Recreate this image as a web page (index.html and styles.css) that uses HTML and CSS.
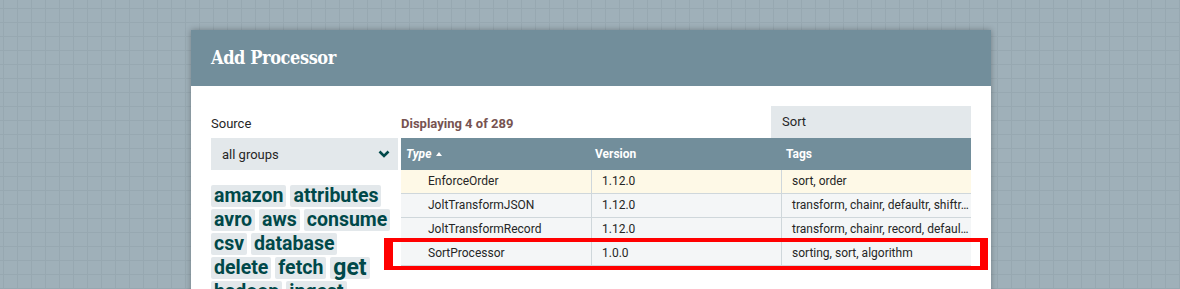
FILE: index.html
```html
<!DOCTYPE html>
<html>
<head>
<meta charset="utf-8">
<link rel="stylesheet" href="styles.css">
</head>
<body>
<div class="dialog">
  <div class="dialog-header">Add Processor</div>
  <div class="dialog-body">
    <div class="side">
      <div class="label">Source</div>
      <div class="select">
        <span>all groups</span>
        <svg class="chev" width="12" height="8" viewBox="0 0 12 8"><polyline points="1.5,1.5 6,6 10.5,1.5" fill="none" stroke="#004849" stroke-width="2.6" stroke-linecap="butt" stroke-linejoin="miter"/></svg>
      </div>
      <div class="cloud">
        <span class="tag">amazon</span><span class="tag">attributes</span><span class="tag">avro</span><span class="tag">aws</span><span class="tag">consume</span><span class="tag">csv</span><span class="tag">database</span><span class="tag">delete</span><span class="tag">fetch</span><span class="tag big">get</span><span class="tag">hadoop</span><span class="tag">ingest</span>
      </div>
    </div>
    <div class="main">
      <div class="topbar">
        <div class="count">Displaying 4 of 289</div>
        <div class="filter">Sort</div>
      </div>
      <div class="table">
        <div class="thead">
          <div class="th th-type">Type <span class="tri"></span></div>
          <div class="th">Version</div>
          <div class="th">Tags</div>
        </div>
        <div class="row selected">
          <div class="td td-type">EnforceOrder</div>
          <div class="td">1.12.0</div>
          <div class="td">sort, order</div>
        </div>
        <div class="row">
          <div class="td td-type">JoltTransformJSON</div>
          <div class="td">1.12.0</div>
          <div class="td">transform, chainr, defaultr, shiftr, sort, removr, cardinality</div>
        </div>
        <div class="row">
          <div class="td td-type">JoltTransformRecord</div>
          <div class="td">1.12.0</div>
          <div class="td">transform, chainr, record, defaultr, shiftr, sort</div>
        </div>
        <div class="row">
          <div class="td td-type">SortProcessor</div>
          <div class="td">1.0.0</div>
          <div class="td">sorting, sort, algorithm</div>
        </div>
        <div class="highlight"></div>
      </div>
    </div>
  </div>
</div>
</body>
</html>
```
FILE: styles.css
```css
html, body {
  margin: 0;
  padding: 0;
  height: 289px;
  overflow: hidden;
}
body {
  background-color: #9fb0b9;
  background-image:
    linear-gradient(to right, #97a8b1 1px, transparent 1px),
    linear-gradient(to bottom, #97a8b1 1px, transparent 1px);
  background-size: 14px 14px;
  background-position: 3px 8px;
  font-family: Roboto, "Liberation Sans", sans-serif;
  color: #262626;
}
.dialog {
  margin: 30px 0 0 191px;
  width: 800px;
  height: 400px;
  background: #ffffff;
  box-shadow: 0 0 6px rgba(0, 0, 0, 0.3);
}
.dialog-header {
  height: 56px;
  background: #728e9b;
  color: #ffffff;
  font-family: "DejaVu Serif Condensed", "DejaVu Serif", serif;
  font-weight: bold;
  font-size: 18px;
  letter-spacing: -0.4px;
  line-height: 56px;
  padding-left: 20px;
}
.dialog-body {
  display: flex;
  gap: 3px;
  padding: 20px 20px 0 20px;
}
.side {
  width: 187px;
  padding-top: 10px;
}
.label {
  font-size: 13px;
  line-height: 16px;
  margin-bottom: 6px;
}
.select {
  height: 32px;
  background: #e3e8eb;
  display: flex;
  align-items: center;
  justify-content: space-between;
  padding: 0 8px 0 11px;
  font-size: 13px;
}
.chev {
  display: block;
}
.cloud {
  margin-top: 15px;
  display: flex;
  flex-wrap: wrap;
  row-gap: 2px;
  column-gap: 4px;
}
.tag {
  flex-shrink: 0;
  background: #e3e8eb;
  color: #004849;
  font-weight: bold;
  font-size: 19.5px;
  line-height: 22px;
  height: 22px;
  padding: 0 3px;
  border-radius: 2px;
}
.tag.big {
  font-size: 23px;
}
.main {
  width: 570px;
}
.topbar {
  display: flex;
  justify-content: space-between;
  align-items: flex-end;
  height: 32px;
}
.count {
  font-size: 13px;
  font-weight: bold;
  color: #775351;
  line-height: 16px;
  padding-bottom: 6px;
}
.filter {
  width: 189px;
  height: 32px;
  background: #e3e8eb;
  font-size: 13px;
  line-height: 31px;
  padding-left: 11px;
}
.table {
  position: relative;
}
.thead {
  display: grid;
  grid-template-columns: 190px 190px 190px;
  height: 32px;
  background: #728e9b;
  color: #ffffff;
  font-size: 12px;
  font-weight: bold;
}
.th {
  line-height: 32px;
  padding-left: 4px;
}
.th-type {
  font-style: italic;
  padding-left: 5px;
}
.th + .th + .th {
  padding-left: 5px;
}
.tri {
  display: inline-block;
  width: 0;
  height: 0;
  border-left: 3.5px solid transparent;
  border-right: 3.5px solid transparent;
  border-bottom: 4px solid #ffffff;
  vertical-align: 2px;
  margin-left: 2px;
}
.row {
  display: grid;
  grid-template-columns: 190px 190px 190px;
  height: 24px;
  background: #f4f6f7;
  border-bottom: 1px solid #cfd7db;
  box-sizing: border-box;
  font-size: 12px;
}
.row.selected {
  background: #fef9e7;
}
.td {
  line-height: 23px;
  padding-left: 10px;
  padding-right: 1px;
  white-space: nowrap;
  overflow: hidden;
  text-overflow: ellipsis;
  border-left: 1px solid #cfd7db;
}
.td-type {
  padding-left: 27px;
  border-left: none;
}
.highlight {
  position: absolute;
  left: -17px;
  top: 100px;
  width: 587px;
  height: 24px;
  border-style: solid;
  border-color: #ff0000;
  border-width: 4px 8px 4px 9px;
}
```
